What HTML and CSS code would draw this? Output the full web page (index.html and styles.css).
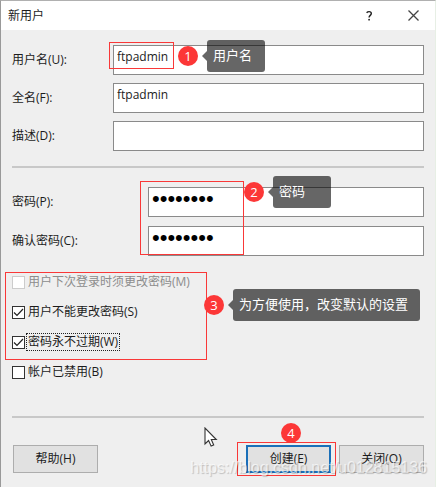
FILE: index.html
```html
<!DOCTYPE html>
<html lang="zh-CN">
<head>
<meta charset="utf-8">
<meta name="viewport" content="width=device-width, initial-scale=1">
<title>新用户</title>
<link rel="stylesheet" href="styles.css">
</head>
<body>
<main class="window">
  <header class="titlebar">
    <h1 class="title">新用户</h1>
    <button class="title-button" type="button" aria-label="帮助"><svg width="8" height="12" viewBox="0 0 9 12"><path d="M1.8 2.4C2.7 1.4 3.6 1.1 4.6 1.1 6.2 1.1 7.1 2 7.1 3.3 7.1 5.3 4.6 5.3 4.6 7.7" fill="none" stroke="#222" stroke-width="1.6"/><circle cx="4.6" cy="10.2" r="1" fill="#222"/></svg></button>
    <button class="title-button" type="button" aria-label="关闭"><svg width="11" height="11" viewBox="0 0 11 11"><path d="M.5.5l10 10M10.5.5l-10 10" fill="none" stroke="#444" stroke-width="1.3"/></svg></button>
  </header>

  <form class="form">
    <div class="fields">
      <div class="row">
        <label for="user">用户名(U):</label>
        <div class="control">
          <input class="field" id="user" type="text" value="ftpadmin">
          <span class="mark mark-user"></span>
          <span class="badge badge-user">1</span>
          <span class="tip tip-user">用户名</span>
        </div>
      </div>
      <div class="row">
        <label for="full">全名(F):</label>
        <div class="control"><input class="field" id="full" type="text" value="ftpadmin"></div>
      </div>
      <div class="row">
        <label for="desc">描述(D):</label>
        <div class="control"><input class="field" id="desc" type="text"></div>
      </div>
    </div>

    <hr class="divider">

    <div class="fields fields-secret">
      <div class="row">
        <label for="pass">密码(P):</label>
        <div class="control">
          <input class="field secret" id="pass" type="password" value="12345678">
          <span class="mark mark-pass"></span>
          <span class="badge badge-pass">2</span>
          <span class="tip tip-pass">密码</span>
        </div>
      </div>
      <div class="row">
        <label for="confirm">确认密码(C):</label>
        <div class="control"><input class="field secret" id="confirm" type="password" value="12345678"></div>
      </div>
    </div>

    <div class="options">
      <label class="option disabled"><input type="checkbox" disabled><span>用户下次登录时须更改密码(M)</span></label>
      <label class="option"><input type="checkbox" checked><span>用户不能更改密码(S)</span></label>
      <label class="option"><input type="checkbox" checked><span class="focused">密码永不过期(W)</span></label>
      <label class="option"><input type="checkbox"><span>帐户已禁用(B)</span></label>
      <span class="mark mark-options"></span>
      <span class="badge badge-options">3</span>
      <span class="tip tip-options">为方便使用，改变默认的设置</span>
    </div>

    <hr class="divider">

    <footer class="actions">
      <button class="push help" type="button">帮助(H)</button>
      <div class="primary">
        <button class="push default" type="button">创建(E)</button>
        <span class="mark mark-create"></span>
        <span class="badge badge-create">4</span>
      </div>
      <button class="push" type="button">关闭(O)</button>
      <span class="watermark">https://blog.csdn.net/u012815136</span>
      <svg class="cursor" width="14" height="21" viewBox="0 0 14 21"><path d="M1 1v16l3.6-3.5 2.5 5.6 2.6-1.1-2.4-5.5h5z" fill="#fff" stroke="#333" stroke-width="1.1"/></svg>
    </footer>
  </form>
</main>
</body>
</html>
```
FILE: styles.css
```css
* {
  box-sizing: border-box;
}

body {
  margin: 0;
  background: #efefef;
  color: #1c1c1c;
  font: 12px/16px "Open Sans", "Noto Sans CJK SC", sans-serif;
}

button,
input {
  margin: 0;
  color: inherit;
  font: inherit;
}

.window {
  position: relative;
  min-height: 100vh;
  overflow: hidden;
  border-top: 1px solid #b0b0b0;
  border-left: 1px solid #999;
  border-right: 1px solid #e7efe5;
}

.titlebar {
  display: flex;
  align-items: center;
  height: 29px;
  padding: 0 3px 0 7px;
  background: #fff;
}

.title {
  flex: 1;
  margin: 0;
  font-size: 12px;
  font-weight: 400;
}

.title-button {
  display: flex;
  align-items: center;
  justify-content: center;
  width: 38px;
  height: 28px;
  margin-left: 6px;
  padding: 0;
  border: 0;
  background: none;
}

.form {
  padding: 15px 11px 14px;
}

.fields {
  display: grid;
  gap: 8px;
}

.row {
  display: grid;
  grid-template-columns: 101px 1fr;
  align-items: center;
}

.fields-secret {
  gap: 9px;
}

.fields-secret .row {
  grid-template-columns: 136px 1fr;
}

.control {
  position: relative;
}

.field {
  display: block;
  width: 100%;
  height: 30px;
  padding: 0 3px 7px;
  border: 1px solid #8a8a8a;
  border-radius: 0;
  outline: 0;
  background: #fff;
}

.secret {
  color: #000;
  font-family: "Liberation Sans", sans-serif;
  font-size: 22px;
}

.divider {
  height: 2px;
  margin: 15px 0 19px;
  border: 0;
  background: #c8c8c8;
}

.options {
  position: relative;
  display: flex;
  flex-direction: column;
  align-items: flex-start;
  margin-top: 11px;
}

.option {
  display: flex;
  align-items: center;
  gap: 1px;
  height: 30px;
}

.option input {
  appearance: none;
  width: 13px;
  height: 13px;
  border: 1px solid #333;
  background: #fff;
}

.option input:checked {
  background: #fff url("data:image/svg+xml,%3Csvg xmlns='http://www.w3.org/2000/svg' viewBox='0 0 11 11'%3E%3Cpath d='M1 5.5l3 3 6-6.5' fill='none' stroke='%23222' stroke-width='1.2'/%3E%3C/svg%3E");
}

.option span {
  padding: 0 1px;
  border: 1px dotted transparent;
}

.option .focused {
  border-color: #222;
}

.disabled {
  color: #8c8c8c;
}

.disabled input {
  border-color: #ccc;
}

.options + .divider {
  margin: 29px 0 27px;
}

.actions {
  position: relative;
  display: flex;
  gap: 8px;
  padding-left: 1px;
}

.push {
  display: block;
  width: 85px;
  height: 28px;
  padding: 0;
  border: 1px solid #adadad;
  border-radius: 0;
  background: #e1e1e1;
}

.help {
  margin-right: auto;
}

.default {
  border: 2px solid #1a6fb8;
}

.primary {
  position: relative;
}

.mark {
  position: absolute;
  border: 1px solid #f93838;
  pointer-events: none;
}

.badge {
  position: absolute;
  width: 20px;
  height: 20px;
  border-radius: 50%;
  background: #fc3737;
  color: #fff;
  font-size: 13px;
  line-height: 20px;
  text-align: center;
}

.tip {
  position: absolute;
  height: 32px;
  padding: 0 6px;
  border-radius: 3px;
  background: rgba(0, 0, 0, 0.6);
  color: #fff;
  font-size: 13px;
  line-height: 30px;
  white-space: nowrap;
}

.tip::before {
  content: "";
  position: absolute;
  top: 11px;
  right: 100%;
  border: 5px solid transparent;
  border-left: 0;
  border-right-color: rgba(0, 0, 0, 0.6);
}

.mark-user {
  top: -3px;
  left: -4px;
  width: 65px;
  height: 27px;
}

.badge-user {
  top: 1px;
  left: 65px;
}

.tip-user {
  top: -5px;
  left: 94px;
  width: 58px;
}

.mark-pass {
  z-index: 1;
  top: -6px;
  left: -8px;
  width: 104px;
  height: 74px;
}

.badge-pass {
  top: -5px;
  left: 96px;
}

.tip-pass {
  top: -11px;
  left: 125px;
  width: 58px;
}

.mark-options {
  top: 5px;
  left: -7px;
  width: 202px;
  height: 88px;
}

.badge-options {
  top: 28px;
  left: 192px;
}

.tip-options {
  top: 22px;
  left: 221px;
  width: 187px;
}

.mark-create {
  top: -3px;
  left: -9px;
  width: 99px;
  height: 34px;
}

.badge-create {
  top: -22px;
  left: 35px;
}

.watermark {
  position: absolute;
  right: -3px;
  bottom: -5px;
  color: rgba(255, 255, 255, 0.65);
  font: 16px/20px "Liberation Sans", sans-serif;
  text-shadow: 1px 1px 1px rgba(0, 0, 0, 0.2);
  pointer-events: none;
}

.cursor {
  position: absolute;
  right: 206px;
  bottom: 25px;
}
```
